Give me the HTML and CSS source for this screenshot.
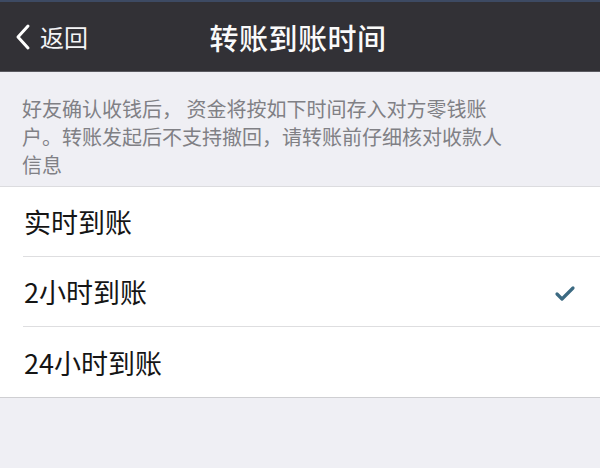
FILE: index.html
```html
<!DOCTYPE html>
<html lang="zh">
<head>
<meta charset="utf-8">
<link rel="stylesheet" href="styles.css">
</head>
<body>
<div class="page">
  <header class="nav">
    <div class="back">
      <svg class="chev" width="18" height="28" viewBox="0 0 18 28"><path d="M14 3 L4 14 L14 25" fill="none" stroke="#fff" stroke-width="3" stroke-linecap="round" stroke-linejoin="round"/></svg>
      <span>返回</span>
    </div>
    <h1 class="title">转账到账时间</h1>
  </header>
  <p class="desc">好友确认收钱后， 资金将按如下时间存入对方零钱账<br>户。转账发起后不支持撤回，请转账前仔细核对收款人<br>信息</p>
  <ul class="list">
    <li class="row"><span>实时到账</span></li>
    <li class="row"><span>2小时到账</span>
      <svg class="check" width="22" height="18" viewBox="0 0 22 18"><path d="M3 10 L8 15 L19 4" fill="none" stroke="#3c6a82" stroke-width="3.2" stroke-linecap="round" stroke-linejoin="round"/></svg>
    </li>
    <li class="row"><span>24小时到账</span></li>
  </ul>
</div>
</body>
</html>
```
FILE: styles.css
```css
* { box-sizing: border-box; margin: 0; padding: 0; }
html, body { width: 600px; height: 468px; overflow: hidden; }
body {
  background: #efeff4;
  font-family: "Noto Sans CJK SC", "Noto Sans", sans-serif;
}
.page { display: flex; flex-direction: column; }
.nav {
  height: 72px;
  background: #323136;
  border-top: 2px solid #3d4a63;
  border-bottom: 1px solid #5a5a60;
  display: flex;
  align-items: center;
  justify-content: center;
  position: relative;
  color: #fff;
}
.back {
  position: absolute;
  left: 14px;
  top: 0;
  bottom: 0;
  display: flex;
  align-items: center;
  gap: 8px;
  font-size: 24px;
  color: #f4f4f6;
}
.chev { margin-top: 1px; }
.title {
  font-size: 29px;
  font-weight: 500;
  letter-spacing: 0.5px;
  margin-left: -4px;
  color: #fafafa;
}
.desc {
  padding: 23px 16px 7px 22px;
  font-size: 20px;
  line-height: 28px;
  color: #808085;
  white-space: nowrap;
}
.list {
  list-style: none;
  background: #fff;
  border-top: 1px solid #dcdcdf;
  border-bottom: 1px solid #cfcfd2;
}
.row {
  height: 70px;
  margin-left: 23px;
  padding-right: 24px;
  display: flex;
  align-items: center;
  justify-content: space-between;
  font-size: 27px;
  color: #151515;
  border-bottom: 1px solid #dedee0;
}
.row:last-child { border-bottom: none; }
.row span { margin-left: 1px; }
.check { margin-top: 2px; }
```
